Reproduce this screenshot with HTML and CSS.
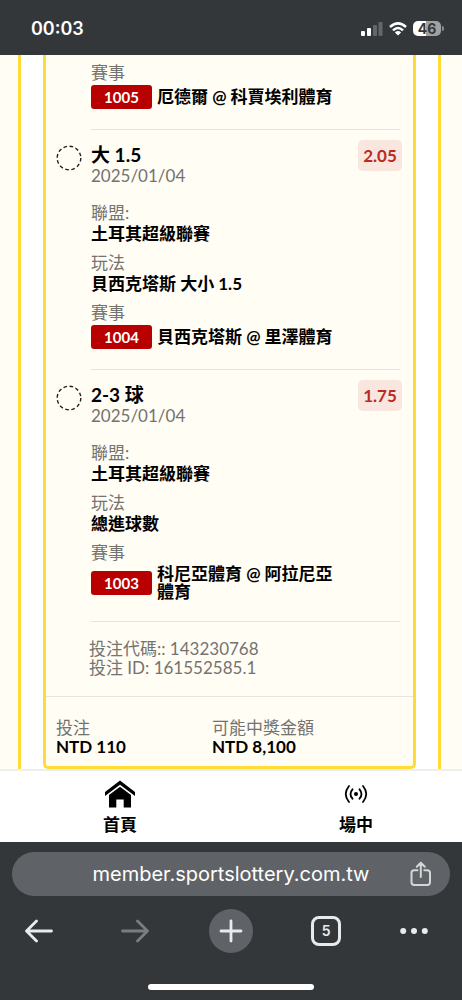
FILE: index.html
```html
<!DOCTYPE html>
<html lang="zh-Hant">
<head>
<meta charset="utf-8">
<meta name="viewport" content="width=device-width, initial-scale=1">
<title>投注紀錄</title>
<link rel="stylesheet" href="styles.css">
</head>
<body>
<div class="screen">
  <header class="status">
    <time class="clock">00:03</time>
    <div class="indicators">
      <svg class="signal" viewBox="0 0 22 14" width="22" height="14" aria-hidden="true">
        <rect x="0" y="9" width="4" height="5" rx="1" fill="#fff"/>
        <rect x="6" y="6" width="4" height="8" rx="1" fill="#fff"/>
        <rect x="12" y="3" width="4" height="11" rx="1" fill="#646668"/>
        <rect x="17.500" y="0" width="4" height="14" rx="1" fill="#646668"/>
      </svg>
      <svg class="wifi" viewBox="0 0 18 14" width="18" height="14" aria-hidden="true">
        <g fill="none" stroke="#fff" stroke-width="2.500"><path d="M1 5 Q9 -2.200 17 5"/><path d="M4 8.300 Q9 3.700 14 8.300"/></g>
        <path d="M9 13.600 L5.900 10.500 Q9 7.700 12.100 10.500Z" fill="#fff"/>
      </svg>
      <div class="battery"><span class="cell">46</span><span class="cap"></span></div>
    </div>
  </header>

  <main class="page">
    <div class="sheet">
      <article class="ticket">
        <section class="leg leg-cut">
          <div class="leg-body">
            <div class="label">賽事</div>
            <div class="match"><span class="code">1005</span><span class="teams">厄德爾 @ 科賈埃利體育</span></div>
          </div>
        </section>
        <section class="leg">
          <svg class="ring" viewBox="0 0 26 26" width="26" height="26" aria-hidden="true"><circle cx="13" cy="13" r="11.800"/></svg>
          <div class="leg-body">
            <div class="head"><h2 class="pick">大 1.5</h2><span class="odds">2.05</span></div>
            <div class="date">2025/01/04</div>
            <div class="field"><div class="label">聯盟:</div><div class="value">土耳其超級聯賽</div></div>
            <div class="field"><div class="label">玩法</div><div class="value">貝西克塔斯 大小 1.5</div></div>
            <div class="label">賽事</div>
            <div class="match"><span class="code">1004</span><span class="teams">貝西克塔斯 @ 里澤體育</span></div>
          </div>
        </section>
        <section class="leg">
          <svg class="ring" viewBox="0 0 26 26" width="26" height="26" aria-hidden="true"><circle cx="13" cy="13" r="11.800"/></svg>
          <div class="leg-body">
            <div class="head"><h2 class="pick">2-3 球</h2><span class="odds">1.75</span></div>
            <div class="date">2025/01/04</div>
            <div class="field"><div class="label">聯盟:</div><div class="value">土耳其超級聯賽</div></div>
            <div class="field"><div class="label">玩法</div><div class="value">總進球數</div></div>
            <div class="label">賽事</div>
            <div class="match"><span class="code">1003</span><span class="teams">科尼亞體育 @ 阿拉尼亞體育</span></div>
          </div>
        </section>
        <div class="refs">
          <div>投注代碼:: 143230768</div>
          <div>投注 ID: 161552585.1</div>
        </div>
        <dl class="totals">
          <div><dt>投注</dt><dd>NTD 110</dd></div>
          <div><dt>可能中獎金額</dt><dd>NTD 8,100</dd></div>
        </dl>
      </article>
    </div>
  </main>

  <nav class="tabs">
    <a class="tab" href="#home">
      <svg viewBox="0 0 30 28" width="30" height="28" aria-hidden="true">
        <path d="M15 .5 L30 12 V16 L15 4.800 L0 16 V12Z"/>
        <path d="M15 6.800 L26 15 V27.500 H18.700 V19.500 H11.300 V27.500 H4 V15Z"/>
      </svg>
      <span>首頁</span>
    </a>
    <a class="tab" href="#live">
      <svg viewBox="0 0 30 28" width="30" height="28" aria-hidden="true">
        <circle cx="15" cy="14" r="2"/>
        <g fill="none" stroke="#000" stroke-width="1.800" stroke-linecap="round">
          <path d="M11.500 9.300 Q7.500 14 11.500 18.700"/><path d="M18.500 9.300 Q22.500 14 18.500 18.700"/>
          <path d="M8 6 Q1.500 14 8 22"/><path d="M22 6 Q28.500 14 22 22"/>
        </g>
      </svg>
      <span>場中</span>
    </a>
  </nav>

  <footer class="browser">
    <div class="address">
      <span class="url">member.sportslottery.com.tw</span>
      <button class="share" type="button" aria-label="分享">
        <svg viewBox="0 0 22 26" width="22" height="26" aria-hidden="true"><path d="M7.500 9.200H4.200A2.700 2.700 0 0 0 1.500 11.900V21.300A2.700 2.700 0 0 0 4.200 24H17.300A2.700 2.700 0 0 0 20 21.300V11.900A2.700 2.700 0 0 0 17.300 9.200H14.300M10.800 16V2M6.800 5.800L10.800 1.800L14.800 5.800"/></svg>
      </button>
    </div>
    <div class="tools">
      <button class="tool" type="button" aria-label="上一頁"><svg viewBox="0 0 28 24" width="28" height="24" aria-hidden="true"><path d="M26.500 12H2M11.500 2L1.500 12L11.500 22"/></svg></button>
      <button class="tool dim" type="button" aria-label="下一頁"><svg viewBox="0 0 28 24" width="28" height="24" aria-hidden="true"><path d="M1.500 12H26M16.500 2L26.500 12L16.500 22"/></svg></button>
      <button class="tool plus" type="button" aria-label="新分頁"><svg viewBox="0 0 28 24" width="28" height="24" aria-hidden="true"><path d="M4 12H24M14 2V22"/></svg></button>
      <button class="tool" type="button" aria-label="分頁"><span class="count">5</span></button>
      <button class="tool more" type="button" aria-label="更多"><svg viewBox="0 0 28 24" width="28" height="24" aria-hidden="true"><g fill="#e8eaed" stroke="none"><circle cx="3.200" cy="12" r="3"/><circle cx="14" cy="12" r="3"/><circle cx="24.800" cy="12" r="3"/></g></svg></button>
    </div>
    <div class="grip"></div>
  </footer>
</div>
</body>
</html>
```
FILE: styles.css
```css
* { box-sizing: border-box; }

body {
  margin: 0;
  background: #34373a;
  color: #000;
  font-family: Lato, "Noto Sans CJK TC", sans-serif;
  font-size: 17px;
  line-height: 21px;
}

button { border: 0; padding: 0; background: none; color: inherit; font: inherit; }
h2, dl, dd { margin: 0; }

.screen { min-height: 100vh; display: flex; flex-direction: column; }

/* Status bar */
.status {
  display: flex;
  align-items: center;
  justify-content: space-between;
  height: 55px;
  padding: 2px 18px 0 31px;
  background: #34373a;
  color: #fff;
}
.clock { font: 600 18px/24px Inter, sans-serif; }
.indicators { display: flex; align-items: center; gap: 6px; }
.battery { display: flex; align-items: center; gap: 1px; }
.cell {
  width: 28px;
  border-radius: 5px;
  background: linear-gradient(90deg, #fff 46%, #a0a1a2 46%);
  color: #34373a;
  font: 700 14px/15px Inter, sans-serif;
  text-align: center;
}
.cap { width: 2px; height: 5px; border-radius: 0 2px 2px 0; background: #8b8d8e; }

/* Ticket */
.page { padding: 0 21px 0 18px; background: #fffdf4; }
.sheet {
  padding: 0 22px;
  border: solid #ffdc35;
  border-width: 0 3px;
  background: #fff;
}
.ticket {
  border: 3px solid #ffdc35;
  border-top: 0;
  border-radius: 0 0 5px 5px;
  background: #fffdf4;
}
.leg { display: flex; padding: 0 13px 0 10px; }
.leg-body {
  flex: 1;
  margin-left: 9px;
  padding: 14px 0 20px;
  border-bottom: 1px solid #e8e5df;
}
.leg-cut .leg-body { margin-left: 35px; padding-top: 7px; }
.ring { flex: none; margin-top: 15px; }
.ring circle { fill: none; stroke: #222; stroke-width: 1.4; stroke-dasharray: 3.6 2.6; }
.head { display: flex; justify-content: space-between; height: 21px; }
.pick { font-size: 19px; font-weight: 700; }
.odds {
  width: 44px;
  height: 31px;
  margin: -4px -2px 0 0;
  border-radius: 5px;
  background: #f8e6df;
  color: #bd2a20;
  font-weight: 700;
  line-height: 31px;
  text-align: center;
}
.date { margin-bottom: 16px; color: #737370; }
.label { color: #737370; }
.field { margin-bottom: 8px; }
.value, .teams { font-weight: 700; }
.match { display: flex; align-items: center; gap: 5px; padding-top: 2px; }
.code {
  flex: none;
  width: 61px;
  border-radius: 3px;
  background: #b90000;
  color: #fff;
  font-size: 15px;
  font-weight: 700;
  line-height: 24px;
  text-align: center;
}
.teams { max-width: 180px; line-height: 18px; }
.refs {
  padding: 17px 43px 19px;
  color: #737370;
  line-height: 19px;
}
.totals {
  display: grid;
  grid-template-columns: 156px 1fr;
  padding: 21px 10px 10px;
  border-top: 1px solid #e8e5df;
  line-height: 19px;
}
.totals dt { color: #737370; }
.totals dd { font-weight: 700; }

/* Site tabs */
.tabs {
  display: flex;
  justify-content: space-between;
  padding: 9px 76px 7px 90px;
  border-top: 2px solid #eee;
  background: #fff;
}
.tab {
  display: flex;
  flex-direction: column;
  align-items: center;
  gap: 6px;
  width: 60px;
  color: #000;
  font-weight: 700;
  text-decoration: none;
}

/* Browser bar */
.browser { flex: 1; padding: 10px 12px; background: #34373a; color: #fff; }
.address {
  display: grid;
  grid-template-columns: 40px 1fr 40px;
  align-items: center;
  height: 44px;
  padding: 0 9px;
  border-radius: 22px;
  background: #5f6367;
}
.url { grid-column: 2; font: 400 20px/24px Inter, sans-serif; text-align: center; }
.share { display: grid; place-items: center; }
.share svg { fill: none; stroke: #d4d5d7; stroke-width: 2; stroke-linecap: round; stroke-linejoin: round; }
.tools { display: flex; justify-content: space-between; margin-top: 13px; padding: 0 22px 0 5px; }
.tool { display: grid; place-items: center; width: 44px; height: 44px; border-radius: 50%; }
.tool svg { fill: none; stroke: #e8eaed; stroke-width: 2.8; stroke-linecap: round; stroke-linejoin: round; }
.tool.more { width: 28px; border-radius: 0; }
.dim svg { stroke: #7a7c7e; }
.plus { background: #5f6367; }
.count {
  width: 30px;
  height: 30px;
  border: 3px solid #e8eaed;
  border-radius: 8px;
  color: #e8eaed;
  font: 600 14px/24px Inter, sans-serif;
}
.grip { width: 166px; height: 6px; margin: 31px auto 0; border-radius: 3px; background: #fff; }
```
